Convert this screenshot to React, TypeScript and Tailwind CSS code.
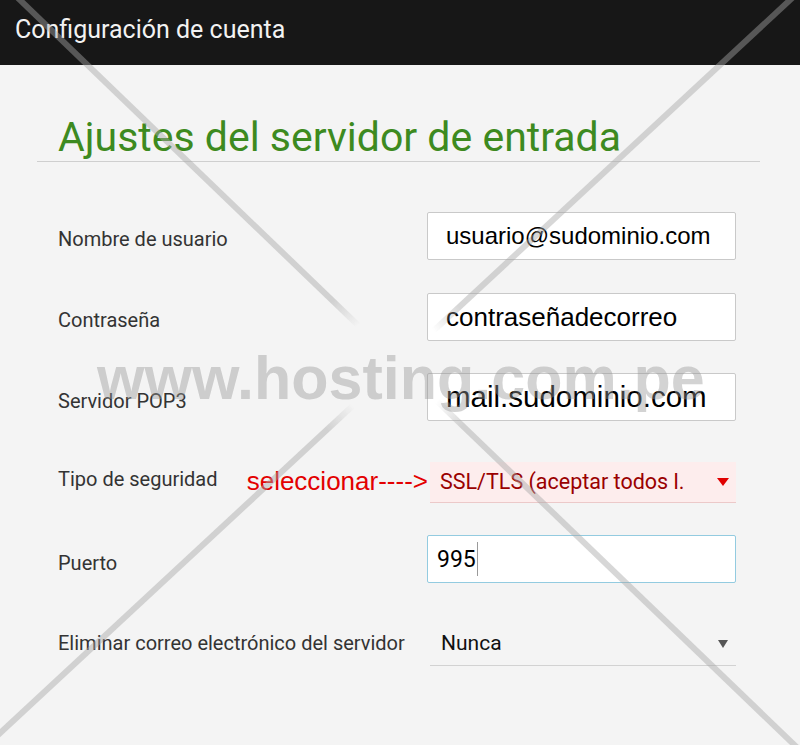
import React from "react";

const roboto = { fontFamily: "Roboto, 'Noto Sans', sans-serif" };

function Label({ children }: { children: React.ReactNode }) {
  return <span className="text-[20px] text-[#333333]">{children}</span>;
}

function TextBox({ value, size }: { value: string; size: string }) {
  return (
    <div className="w-[309px] h-[48px] bg-white border border-[#c9c9c9] rounded-[2px] flex items-center pl-[18px]">
      <span className={`${size} text-black font-['Liberation_Sans',Arial,sans-serif] leading-none`}>{value}</span>
    </div>
  );
}

export default function App() {
  return (
    <div className="relative w-[800px] h-[745px] overflow-hidden bg-[#f4f4f4]" style={roboto}>
      {/* Top bar */}
      <div className="h-[65px] bg-[#171717] flex items-center pl-[15px] pb-[5px]">
        <span className="text-[25px] text-[#f2f2f2]">Configuración de cuenta</span>
      </div>

      {/* Section heading */}
      <div className="ml-[37px] mr-[40px] mt-[48px] h-[49px] border-b border-[#cfcfcf] pl-[21px] flex items-center">
        <h1 className="text-[41px] leading-none text-[#3d8a20]">Ajustes del servidor de entrada</h1>
      </div>

      {/* Form rows */}
      <div className="mt-[33px] flex flex-col">
        <div className="h-[81px] flex items-center">
          <div className="w-[427px] pl-[58px] pt-[7px]"><Label>Nombre de usuario</Label></div>
          <TextBox value="usuario@sudominio.com" size="text-[24px]" />
        </div>
        <div className="h-[81px] flex items-center">
          <div className="w-[427px] pl-[58px] pt-[7px]"><Label>Contraseña</Label></div>
          <TextBox value="contraseñadecorreo" size="text-[26px]" />
        </div>
        <div className="h-[80px] flex items-center">
          <div className="w-[427px] pl-[58px] pt-[7px]"><Label>Servidor POP3</Label></div>
          <TextBox value="mail.sudominio.com" size="text-[29.5px]" />
        </div>
        <div className="h-[81px] flex items-center">
          <div className="w-[430px] pl-[58px] pr-[2px] pt-[3px] flex items-center justify-between">
            <Label>Tipo de seguridad</Label>
            <span className="text-[26px] leading-none text-[#e30000] font-['Liberation_Sans',Arial,sans-serif] pt-[4px]">
              seleccionar----&gt;
            </span>
          </div>
          <div className="w-[306px] h-[41px] mt-[9px] bg-[#fdeded] border-b border-[#ecc9c9] flex items-center justify-between pl-[10px] pr-[6px]">
            <span className="text-[21.5px] text-[#9a0000] leading-none">SSL/TLS (aceptar todos l.</span>
            <svg width="14" height="10" viewBox="0 0 14 10">
              <path d="M1 1 L13 1 L7 9 Z" fill="#e00000" />
            </svg>
          </div>
        </div>
        <div className="h-[82px] flex items-center">
          <div className="w-[427px] pl-[58px] pt-[8px]"><Label>Puerto</Label></div>
          <div className="w-[309px] h-[48px] bg-white border border-[#93cbe0] rounded-[2px] flex items-center pl-[9px]">
            <span className="text-[23px] text-black leading-none">995</span>
            <span className="ml-[1px] w-[1px] h-[34px] bg-[#9a9a9a]" />
          </div>
        </div>
        <div className="h-[80px] flex items-center">
          <div className="w-[430px] pl-[58px] pt-[6px]"><Label>Eliminar correo electrónico del servidor</Label></div>
          <div className="w-[306px] h-[44px] mt-[8px] border-b border-[#d2d2d2] flex items-center justify-between pl-[11px] pr-[6px]">
            <span className="text-[21px] text-[#111111] leading-none">Nunca</span>
            <svg width="14" height="10" viewBox="0 0 14 10">
              <path d="M2 1 L12 1 L7 9 Z" fill="#555555" />
            </svg>
          </div>
        </div>
      </div>

      {/* Watermark overlay */}
      <svg className="absolute inset-0 pointer-events-none" width="800" height="745" viewBox="0 0 800 745">
        <defs>
          <radialGradient id="gapfade" cx="393" cy="368" r="110" gradientUnits="userSpaceOnUse">
            <stop offset="0.5" stopColor="black" />
            <stop offset="0.82" stopColor="white" />
          </radialGradient>
          <mask id="gapmask">
            <rect width="800" height="745" fill="url(#gapfade)" />
          </mask>
        </defs>
        <g mask="url(#gapmask)" stroke="rgb(167,167,167)" strokeOpacity="0.45" strokeWidth="6">
          <line x1="9.6" y1="-10" x2="810" y2="760" />
          <line x1="800.8" y1="-10" x2="-29" y2="760" />
        </g>
      </svg>
      <div className="absolute left-[97px] top-[348px] text-[61px] leading-none font-bold text-[rgba(150,150,150,0.42)] font-['Liberation_Sans',Arial,sans-serif] pointer-events-none whitespace-nowrap">
        www.hosting.com.pe
      </div>
    </div>
  );
}
